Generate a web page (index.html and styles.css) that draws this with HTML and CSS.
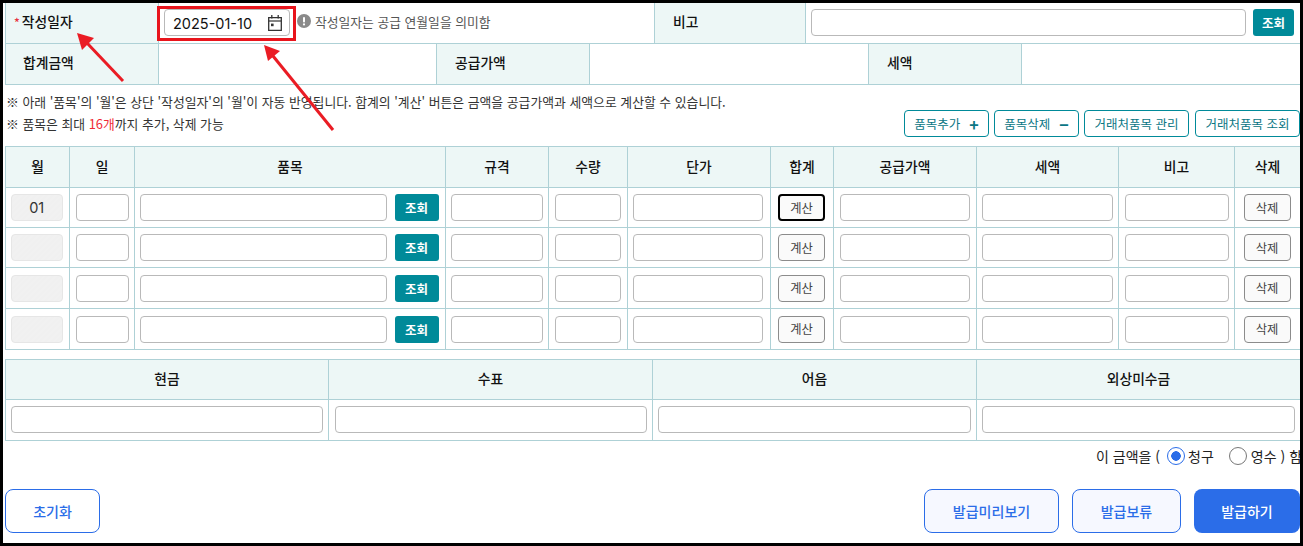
FILE: index.html
```html
<!DOCTYPE html>
<html lang="ko">
<head>
  <meta charset="UTF-8">
  <meta name="viewport" content="width=device-width, initial-scale=1.0">
  <title>세금계산서 발급</title>
  <link rel="stylesheet" href="styles.css">
</head>
<body>

<div class="frame">
  <table class="info-table first">
    <tr>
      <th class="w-label left"><span class="req">*</span>작성일자</th>
      <td class="date-cell">
        <div class="date-wrap">
          <div class="date-input">
            <span>2025-01-10</span>
            <svg width="14" height="16" viewBox="0 0 14 16" fill="none" stroke="#333" stroke-width="1.3">
              <path d="M.7 2.7h12.6v12.6H.7z"/>
              <path d="M.7 6h12.6" stroke-width="1.2"/>
              <path d="M3.8 0v3.6M10.2 0v3.6"/>
              <rect x="3" y="8.6" width="2.6" height="2.6" fill="#333" stroke="none"/>
            </svg>
          </div>
          <span class="hint">
            <svg width="14" height="14" viewBox="0 0 14 14">
              <circle cx="7" cy="7" r="7" fill="#8a8a8a"/>
              <rect x="6" y="3" width="2" height="5.4" rx="1" fill="#fff"/>
              <circle cx="7" cy="10.4" r="1.1" fill="#fff"/>
            </svg>
            작성일자는 공급 연월일을 의미함
          </span>
        </div>
      </td>
      <th class="w-remark left">비고</th>
      <td>
        <div class="remark-wrap">
          <input class="field" type="text">
          <button class="btn-teal small">조회</button>
        </div>
      </td>
    </tr>
  </table>
  <table class="info-table second">
    <tr>
      <th class="w-label left">합계금액</th>
      <td class="w-a"></td>
      <th class="w-b left">공급가액</th>
      <td class="w-c"></td>
      <th class="w-b left">세액</th>
      <td></td>
    </tr>
  </table>

  <section class="notes">
    <div class="note-text">
      <p>※ 아래 '품목'의 '월'은 상단 '작성일자'의 '월'이 자동 반영됩니다. 합계의 '계산' 버튼은 금액을 공급가액과 세액으로 계산할 수 있습니다.</p>
      <p>※ 품목은 최대 <em>16개</em>까지 추가, 삭제 가능</p>
    </div>
    <div class="note-btns">
      <button class="btn-line w85">품목추가<span class="sign">+</span></button>
      <button class="btn-line w85">품목삭제<span class="sign">−</span></button>
      <button class="btn-line w105">거래처품목 관리</button>
      <button class="btn-line w105 last">거래처품목 조회</button>
    </div>
  </section>

  <table class="item-table">
    <colgroup>
      <col class="c1"><col class="c2"><col class="c3"><col class="c4"><col class="c5"><col class="c6">
      <col class="c7"><col class="c8"><col class="c9"><col class="c10"><col class="c11">
    </colgroup>
    <thead>
      <tr>
        <th>월</th><th>일</th><th>품목</th><th>규격</th><th>수량</th><th>단가</th>
        <th>합계</th><th>공급가액</th><th>세액</th><th>비고</th><th>삭제</th>
      </tr>
    </thead>
    <tbody>
      <tr>
        <td><div class="month">01</div></td>
        <td><input class="field" type="text"></td>
        <td><div class="item-wrap"><input class="field" type="text"><button class="btn-teal">조회</button></div></td>
        <td><input class="field" type="text"></td>
        <td><input class="field" type="text"></td>
        <td><input class="field" type="text"></td>
        <td><button class="btn-gray focus">계산</button></td>
        <td><input class="field" type="text"></td>
        <td><input class="field" type="text"></td>
        <td><input class="field" type="text"></td>
        <td><button class="btn-gray">삭제</button></td>
      </tr>
      <tr>
        <td><div class="month"></div></td>
        <td><input class="field" type="text"></td>
        <td><div class="item-wrap"><input class="field" type="text"><button class="btn-teal">조회</button></div></td>
        <td><input class="field" type="text"></td>
        <td><input class="field" type="text"></td>
        <td><input class="field" type="text"></td>
        <td><button class="btn-gray">계산</button></td>
        <td><input class="field" type="text"></td>
        <td><input class="field" type="text"></td>
        <td><input class="field" type="text"></td>
        <td><button class="btn-gray">삭제</button></td>
      </tr>
      <tr>
        <td><div class="month"></div></td>
        <td><input class="field" type="text"></td>
        <td><div class="item-wrap"><input class="field" type="text"><button class="btn-teal">조회</button></div></td>
        <td><input class="field" type="text"></td>
        <td><input class="field" type="text"></td>
        <td><input class="field" type="text"></td>
        <td><button class="btn-gray">계산</button></td>
        <td><input class="field" type="text"></td>
        <td><input class="field" type="text"></td>
        <td><input class="field" type="text"></td>
        <td><button class="btn-gray">삭제</button></td>
      </tr>
      <tr>
        <td><div class="month"></div></td>
        <td><input class="field" type="text"></td>
        <td><div class="item-wrap"><input class="field" type="text"><button class="btn-teal">조회</button></div></td>
        <td><input class="field" type="text"></td>
        <td><input class="field" type="text"></td>
        <td><input class="field" type="text"></td>
        <td><button class="btn-gray">계산</button></td>
        <td><input class="field" type="text"></td>
        <td><input class="field" type="text"></td>
        <td><input class="field" type="text"></td>
        <td><button class="btn-gray">삭제</button></td>
      </tr>
    </tbody>
  </table>

  <table class="pay-table">
    <thead>
      <tr><th>현금</th><th>수표</th><th>어음</th><th>외상미수금</th></tr>
    </thead>
    <tbody>
      <tr>
        <td><input class="field" type="text"></td>
        <td><input class="field" type="text"></td>
        <td><input class="field" type="text"></td>
        <td><input class="field" type="text"></td>
      </tr>
    </tbody>
  </table>

  <div class="claim">
    <span>이 금액을 (</span>
    <span class="radio on"></span><span class="claim-a">청구</span>
    <span class="radio"></span><span>영수 ) 함</span>
  </div>

  <div class="actions">
    <button class="btn-reset">초기화</button>
    <div class="actions-right">
      <button class="btn-soft w135">발급미리보기</button>
      <button class="btn-soft w108">발급보류</button>
      <button class="btn-blue">발급하기</button>
    </div>
  </div>

  <!-- annotation marks on top of the form -->
  <div class="mark-box"></div>
  <svg class="marks" width="1303" height="546" viewBox="0 0 1303 546">
    <path d="M123 81 L87 43" stroke="#ea1c24" stroke-width="3" fill="none"/>
    <path d="M77 33 L94 38 L82 50 Z" fill="#ea1c24"/>
    <path d="M333 130 L273 56" stroke="#ea1c24" stroke-width="3" fill="none"/>
    <path d="M264 45 L280 51 L268 61 Z" fill="#ea1c24"/>
  </svg>
</div>

</body>
</html>
```

FILE: styles.css
```css
:root {
  --line: #aed1d6;
  --head: #edf7f6;
  --teal: #008a99;
  --blue: #2b6de8;
  --field: #b9b9b9;
}

* {
  box-sizing: border-box;
}

html, body {
  margin: 0;
  height: 546px;
  overflow: hidden;
}

body {
  font-family: "Noto Sans CJK KR", "Noto Sans", sans-serif;
  font-size: 13px;
  color: #222;
  background: #000;
}

button, input {
  font-family: inherit;
}

.frame {
  position: relative;
  width: 1297px;
  height: 540px;
  margin: 3px;
  background: #fff;
  overflow: hidden;
  padding-left: 2px;
}

table {
  border-collapse: collapse;
  table-layout: fixed;
  width: 1296px;
}

th, td {
  border: 1px solid var(--line);
  padding: 0;
}

th {
  background: var(--head);
  font-size: 13.8px;
  font-weight: 500;
  color: #111;
  text-align: center;
  padding-bottom: 2px;
}

th.left {
  text-align: left;
  padding-left: 18px;
  padding-bottom: 3px;
}

.first tr { height: 40px; }
.second tr { height: 41px; }
.first th, .first td { border-top: 0; }
.second th, .second td { border-top: 0; }

.first .left.w-label { padding-left: 8px; }
.second .left.w-label { padding-left: 17px; }
.w-label { width: 153px; }
.w-remark { width: 151px; }
.w-a { width: 278px; }
.w-b { width: 153px; }
.w-c { width: 279px; }
.date-cell { width: 496px; }

.req {
  color: #e8323c;
  font-size: 12px;
  margin-right: 2px;
}

.date-wrap {
  display: flex;
  align-items: center;
  padding-left: 5px;
  gap: 7px;
}

.date-input {
  width: 126px;
  height: 27px;
  border: 1px solid var(--field);
  border-radius: 4px;
  display: flex;
  align-items: center;
  justify-content: space-between;
  padding: 1px 7px 0 8px;
  font-family: Inter, sans-serif;
  font-size: 14.5px;
  color: #111;
}

.hint {
  display: flex;
  align-items: center;
  gap: 4px;
  font-size: 12.8px;
  color: #555;
  margin-bottom: 3px;
}

.remark-wrap {
  display: flex;
  align-items: center;
  gap: 7px;
  padding: 0 6px 0 5px;
}

.field {
  display: block;
  width: 100%;
  height: 27px;
  border: 1px solid var(--field);
  border-radius: 4px;
  background: #fff;
  padding: 0 6px;
  margin: 0;
}

.btn-teal {
  flex: none;
  width: 44px;
  height: 27px;
  border: 0;
  border-radius: 3px;
  background: var(--teal);
  color: #fff;
  font-size: 12.5px;
  font-weight: 700;
  padding: 0;
}

.btn-teal.small {
  width: 41px;
}

.notes {
  display: flex;
  justify-content: space-between;
  align-items: flex-end;
  height: 61px;
  padding: 0 0 9px 1px;
}

.note-text p {
  margin: 0;
  font-size: 12.85px;
  line-height: 22px;
  color: #333;
  position: relative;
  top: -2px;
}

.note-text em {
  color: #f02a35;
  font-style: normal;
}

.note-btns {
  display: flex;
  gap: 5px;
}

.btn-line {
  height: 27px;
  border: 1px solid var(--teal);
  border-radius: 4px;
  background: #fff;
  color: #0a7684;
  font-size: 12.5px;
  padding: 0;
  display: flex;
  align-items: center;
  justify-content: center;
}

.w85 { width: 85px; }
.w105 { width: 105px; }
.btn-line.last { margin-left: 1px; }

.sign {
  margin-left: 9px;
  font-size: 16px;
  font-weight: 700;
  line-height: 1;
}

.item-table .c1 { width: 64px; }
.item-table .c2 { width: 65px; }
.item-table .c3 { width: 311px; }
.item-table .c4 { width: 103px; }
.item-table .c5 { width: 79px; }
.item-table .c6 { width: 143px; }
.item-table .c7 { width: 63px; }
.item-table .c8 { width: 143px; }
.item-table .c9 { width: 142px; }
.item-table .c10 { width: 116px; }

.item-table thead tr { height: 41px; }
.item-table tbody tr:nth-child(1) { height: 40px; }
.item-table tbody tr:nth-child(2) { height: 40px; }
.item-table tbody tr:nth-child(3) { height: 41px; }
.item-table tbody tr:nth-child(4) { height: 41px; }

.item-table td {
  padding: 0 6.5px 0 5px;
  text-align: center;
}

.item-table td:nth-child(2) { padding: 0 5.5px; }
.item-table td:nth-child(4) { padding: 0 5.5px 0 5px; }
.item-table td:nth-child(5) { padding: 0 6.5px 0 5.5px; }
.item-table td:nth-child(6) { padding: 0 7.5px 0 5px; }
.item-table td:nth-child(8) { padding: 0 6.5px 0 5.5px; }
.item-table td:nth-child(9) { padding: 0 5.5px 0 5px; }
.item-table td:nth-child(10) { padding: 0 5.5px 0 6px; }
.item-table td:nth-child(7),
.item-table td:nth-child(11) { padding: 0 5.5px; }

.month {
  height: 27px;
  border: 1px solid #e6e6e6;
  border-radius: 4px;
  background: repeating-linear-gradient(135deg, #f0f0f0 0 2px, #f1f1f1 2px 4px);
  font-family: Inter, sans-serif;
  font-size: 14.5px;
  line-height: 25px;
  color: #333;
  text-align: center;
}

.item-wrap {
  display: flex;
  gap: 8px;
}

.btn-gray {
  width: 47px;
  height: 27px;
  border: 1px solid #8c8c8c;
  border-radius: 4px;
  background: #fafafa;
  color: #444;
  font-size: 12.3px;
  padding: 0;
  margin-left: -1px;
}

.btn-gray.focus {
  border: 2px solid #000;
}

.pay-table {
  margin-top: 9px;
}

.pay-table th:nth-child(1) { width: 323px; }
.pay-table th:nth-child(2) { width: 324px; }
.pay-table th:nth-child(3) { width: 324px; }

.pay-table thead tr { height: 40px; }
.pay-table tbody tr { height: 41px; }

.pay-table th {
  padding-bottom: 3px;
}

.pay-table td {
  padding: 0 5.5px 1px 5px;
}

.pay-table td:nth-child(2) {
  padding: 0 5.5px 1px;
}

.claim {
  display: flex;
  align-items: center;
  justify-content: flex-start;
  height: 30px;
  width: 1297px;
  padding-left: 1091px;
  font-size: 14px;
  color: #222;
  white-space: nowrap;
}

.radio {
  width: 18px;
  height: 18px;
  border: 1px solid #777;
  border-radius: 50%;
  margin: 0 4px 0 7px;
  background: #fff;
  flex: none;
}

.radio.on {
  border: 1.5px solid var(--blue);
  background: radial-gradient(circle, var(--blue) 0 4.5px, #fff 5px);
}

.claim-a {
  margin: 0 8px 0 -1px;
}

.actions {
  display: flex;
  justify-content: space-between;
  width: 1295px;
  margin-top: 18px;
}

.actions-right {
  display: flex;
  gap: 13px;
}

.actions button {
  height: 44px;
  border-radius: 8px;
  font-size: 14px;
  font-weight: 500;
  padding: 0;
}

.btn-reset {
  width: 95px;
  border: 1px solid var(--blue);
  background: #fff;
  color: var(--blue);
}

.btn-soft {
  border: 1px solid var(--blue);
  background: #f6f8ff;
  color: var(--blue);
}

.w135 { width: 135px; }
.w108 { width: 109px; }

.btn-blue {
  width: 106px;
  border: 0;
  background: var(--blue);
  color: #fff;
}

.mark-box {
  position: absolute;
  left: 154px;
  top: 3px;
  width: 139px;
  height: 35px;
  border: 3px solid #e8141c;
}

.marks {
  position: absolute;
  left: -3px;
  top: -3px;
  pointer-events: none;
}
```
